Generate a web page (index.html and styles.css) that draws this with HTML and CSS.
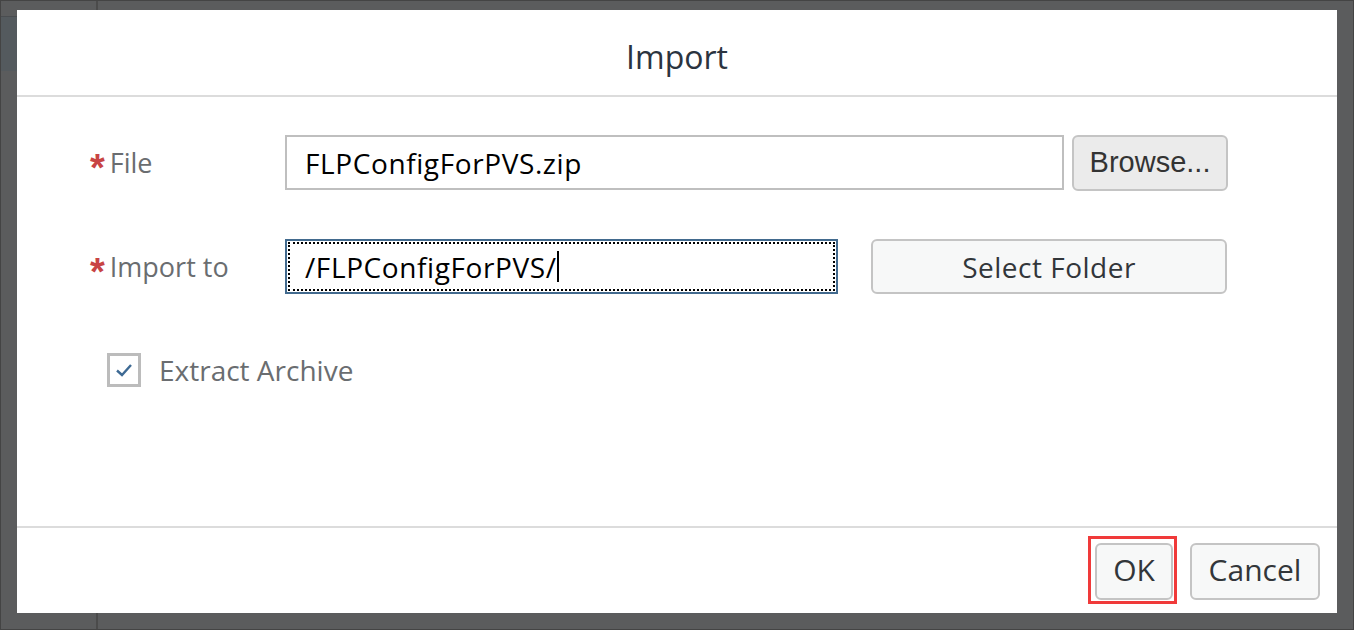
FILE: index.html
```html
<!DOCTYPE html>
<html>
<head>
<meta charset="utf-8">
<link rel="stylesheet" href="styles.css">
</head>
<body>
<div class="backdrop">
  <div class="bg-divider top"></div>
  <div class="bg-divider bottom"></div>
  <div class="bg-side"></div>
  <div class="dialog">
    <header class="dlg-header">Import</header>
    <main class="dlg-content">
      <div class="row row-file">
        <label class="label"><span class="req">*</span>File</label>
        <div class="input input-file">FLPConfigForPVS.zip</div>
        <button class="btn btn-browse">Browse...</button>
      </div>
      <div class="row row-import">
        <label class="label"><span class="req">*</span>Import to</label>
        <div class="input input-folder"><div class="focus-ring">/FLPConfigForPVS/<span class="caret"></span></div></div>
        <button class="btn btn-select">Select Folder</button>
      </div>
      <div class="row row-check">
        <span class="checkbox">
          <svg width="20" height="16" viewBox="0 0 20 16"><path d="M3 8.5 L8 13 L17 3" fill="none" stroke="#3e6a94" stroke-width="2.4"/></svg>
        </span>
        <span class="check-label">Extract Archive</span>
      </div>
    </main>
    <footer class="dlg-footer">
      <span class="highlight"><button class="btn btn-ok">OK</button></span>
      <button class="btn btn-cancel">Cancel</button>
    </footer>
  </div>
</div>
</body>
</html>
```
FILE: styles.css
```css
html, body {
  margin: 0;
  padding: 0;
}
body {
  width: 1354px;
  height: 630px;
  overflow: hidden;
  background: #5b5b5b;
  font-family: "Open Sans", "Noto Sans", sans-serif;
}
.backdrop {
  position: relative;
  box-sizing: border-box;
  width: 1354px;
  height: 630px;
  padding: 10px 17px 17px 17px;
  border: 1px solid #444;
  background: #5b5c5d;
}
.bg-divider {
  position: absolute;
  left: 95px;
  width: 2px;
  background: #4b4b4b;
}
.bg-divider.top { top: 0; height: 10px; }
.bg-divider.bottom { bottom: 0; height: 17px; }
.bg-side {
  position: absolute;
  left: 0;
  top: 15px;
  width: 16px;
  height: 54px;
  background: #545a5e;
  border-top: 1px solid #4a4d50;
}
.dialog {
  position: relative;
  margin-top: -1px;
  margin-left: -1px;
  width: 1320px;
  height: 603px;
  background: #fff;
  display: flex;
  flex-direction: column;
}
.dlg-header {
  border-bottom: 2px solid #dcdcdc;
  display: flex;
  align-items: center;
  justify-content: center;
  font-size: 32px;
  color: #2b3440;
  box-sizing: border-box;
  padding-top: 8px;
  height: 87px;
}
.dlg-content {
  flex: 1;
  padding: 38px 0 0 73px;
  border-bottom: 2px solid #dcdcdc;
}
.row {
  display: flex;
  align-items: center;
}
.row-file { height: 55px; }
.row-import { height: 55px; margin-top: 49px; }
.row-check { margin-top: 59px; margin-left: 17px; height: 33px; }
.label {
  width: 195px;
  font-size: 27px;
  color: #6a6d70;
  display: flex;
  align-items: center;
}
.req {
  color: #c84444;
  font-size: 38px;
  font-weight: bold;
  margin-right: 5px;
  line-height: 1;
  position: relative;
  top: 5px;
  font-family: "Liberation Sans", Arial, sans-serif;
}
.input {
  box-sizing: border-box;
  height: 55px;
  font-size: 28px;
  letter-spacing: 0.6px;
  color: #000;
  display: flex;
  align-items: center;
}
.input-file {
  width: 779px;
  border: 2px solid #bfbfbf;
  padding-left: 18px;
}
.input-folder {
  width: 553px;
  border: 2px solid #426a8e;
  padding: 1px;
}
.focus-ring {
  box-sizing: border-box;
  width: 100%;
  height: 100%;
  border: 2px dotted #000;
  display: flex;
  align-items: center;
  padding-left: 15px;
}
.caret {
  display: inline-block;
  width: 2px;
  height: 31px;
  background: #000;
  margin-left: 0;
}
.btn {
  box-sizing: border-box;
  font-family: "Open Sans", "Noto Sans", sans-serif;
  font-size: 28px;
  color: #32363a;
  border: 2px solid #c4c4c4;
  border-radius: 6px;
  background: #f7f8f8;
  padding: 0;
}
.btn-browse {
  margin-left: 8px;
  width: 156px;
  height: 56px;
  background: #ebebeb;
  color: #333;
  font-size: 29px;
  font-family: "Liberation Sans", Arial, sans-serif;
}
.btn-select {
  margin-left: 33px;
  width: 356px;
  height: 55px;
  letter-spacing: 0.5px;
}
.checkbox {
  box-sizing: border-box;
  width: 34px;
  height: 34px;
  border: 3px solid #bcbcbc;
  display: flex;
  align-items: center;
  justify-content: center;
  background: #fff;
}
.check-label {
  margin-left: 18px;
  font-size: 28px;
  color: #6a6d70;
}
.dlg-footer {
  height: 85px;
  display: flex;
  align-items: center;
  justify-content: flex-end;
  padding-right: 17px;
  box-sizing: border-box;
  gap: 13px;
}
.highlight {
  display: flex;
  padding: 4px 1px 1px 4px;
  border: 3px solid #f03a3a;
  margin-top: -1px;
}
.btn-ok {
  width: 78px;
  height: 57px;
  font-size: 30px;
  padding-bottom: 4px;
}
.btn-cancel {
  width: 130px;
  height: 57px;
  margin-top: 1px;
  font-size: 30px;
  padding-bottom: 4px;
}
```
